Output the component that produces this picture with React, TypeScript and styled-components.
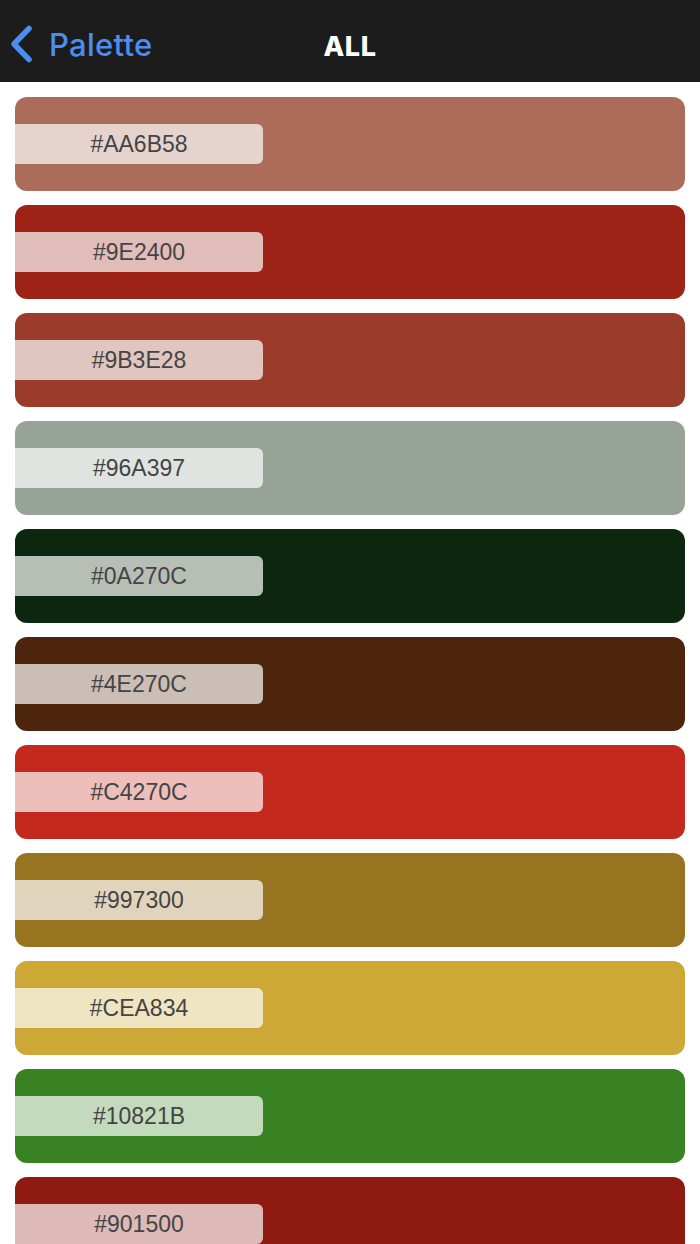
import styled, { createGlobalStyle } from 'styled-components';

type Swatch = { hex: string; fill: string };

// hex is the stored value, fill is how the tile renders on screen
const palette: Swatch[] = [
  { hex: '#AA6B58', fill: '#AB6D5A' },
  { hex: '#9E2400', fill: '#9C2315' },
  { hex: '#9B3E28', fill: '#9A3C29' },
  { hex: '#96A397', fill: '#98A398' },
  { hex: '#0A270C', fill: '#0C270D' },
  { hex: '#4E270C', fill: '#4D250D' },
  { hex: '#C4270C', fill: '#C4291D' },
  { hex: '#997300', fill: '#987421' },
  { hex: '#CEA834', fill: '#CEA837' },
  { hex: '#10821B', fill: '#388223' },
  { hex: '#901500', fill: '#8E1A12' },
];

const GlobalStyle = createGlobalStyle`
  html, body {
    margin: 0;
    padding: 0;
    background: #ffffff;
    font-family: Inter, "Liberation Sans", sans-serif;
  }
`;

function ChevronLeft() {
  return (
    <svg width="26" height="40" viewBox="0 0 26 40" fill="none">
      <path d="M21 4.5 L6 20 L21 35.5" stroke="#4A8EF2" strokeWidth="5.5" strokeLinecap="round" strokeLinejoin="round" />
    </svg>
  );
}

export default function App() {
  return (
    <>
      <GlobalStyle />
      <Page>
        <NavBar>
          <BackButton>
            <ChevronLeft />
            <BackLabel>Palette</BackLabel>
          </BackButton>
          <Title>ALL</Title>
        </NavBar>
        <SwatchList>
          {palette.map(({ hex, fill }) => (
            <Tile key={hex} $color={fill}>
              <HexTag>{hex}</HexTag>
            </Tile>
          ))}
        </SwatchList>
      </Page>
    </>
  );
}

const Page = styled.div`
  width: 700px;
  height: 1244px;
  overflow: hidden;
  background: #ffffff;
`;

const NavBar = styled.header`
  position: relative;
  display: flex;
  align-items: center;
  height: 82px;
  padding: 0 0 0 8px;
  box-sizing: border-box;
  background: #1c1c1c;
`;

const BackButton = styled.button`
  display: flex;
  align-items: center;
  gap: 15px;
  border: 0;
  background: none;
  padding: 0;
  margin-top: 6px;
  cursor: pointer;
`;

const BackLabel = styled.span`
  color: #4a8ef2;
  font-family: Inter, "Liberation Sans", sans-serif;
  font-size: 31px;
  font-weight: 500;
  letter-spacing: 0.3px;
`;

const Title = styled.h1`
  position: absolute;
  left: 50%;
  top: 50%;
  transform: translate(-50%, -34%);
  margin: 0;
  color: #ffffff;
  font-family: Inter, "Liberation Sans", sans-serif;
  font-size: 27px;
  font-weight: 800;
  letter-spacing: 0.6px;
`;

const SwatchList = styled.div`
  display: flex;
  flex-direction: column;
  gap: 14px;
  padding: 15px 15px 0;
`;

const Tile = styled.div<{ $color: string }>`
  flex-shrink: 0;
  display: flex;
  align-items: center;
  height: 94px;
  border-radius: 12px;
  background: ${(props) => props.$color};
  overflow: hidden;
`;

const HexTag = styled.div`
  display: flex;
  align-items: center;
  justify-content: center;
  width: 248px;
  height: 40px;
  padding-top: 1px;
  box-sizing: border-box;
  border-radius: 0 6px 6px 0;
  background: rgba(255, 255, 255, 0.7);
  color: #444444;
  font-family: "Liberation Sans", Arial, sans-serif;
  font-size: 23px;
`;
